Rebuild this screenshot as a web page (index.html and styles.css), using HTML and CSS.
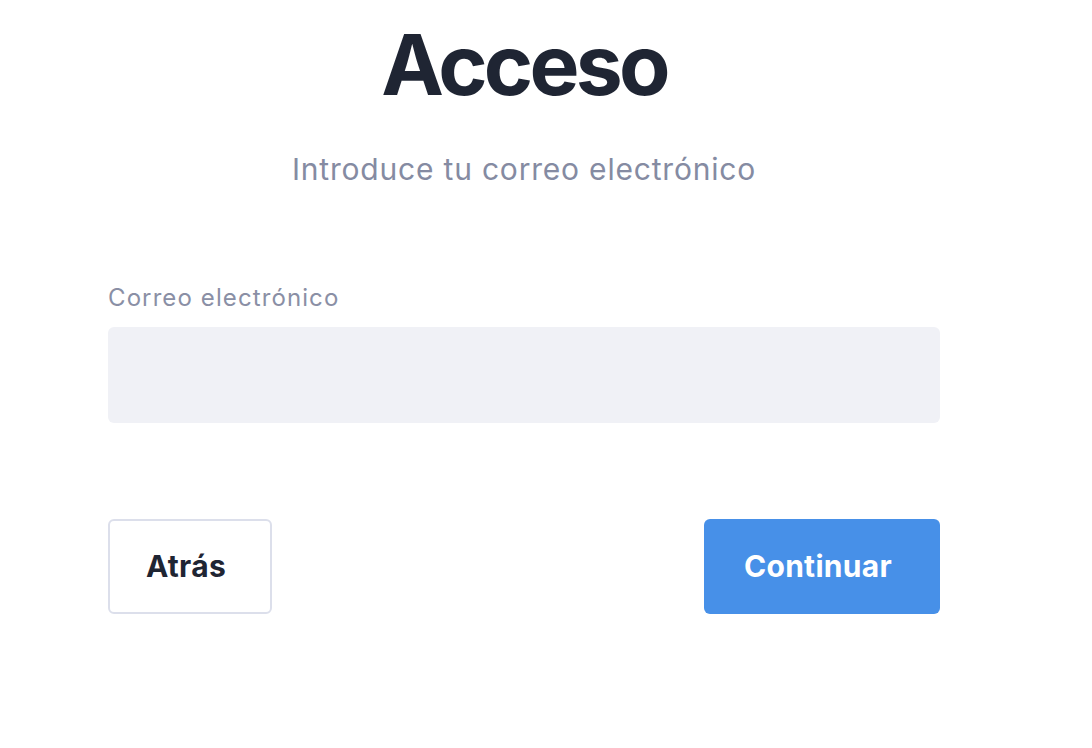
FILE: index.html
```html
<!DOCTYPE html>
<html lang="es">
<head>
    <meta charset="UTF-8">
    <meta name="viewport" content="width=device-width, initial-scale=1.0">
    <title>Acceso</title>
    <link rel="stylesheet" href="styles.css">
</head>
<body>
    <div class="login">
        <h1 class="title">Acceso</h1>
        <p class="subtitle">Introduce tu correo electrónico</p>

        <form class="login-form">
            <label for="email" class="label">Correo electrónico</label>
            <input type="email" id="email" class="input">

            <div class="actions">
                <button type="button" class="btn btn-back">Atrás</button>
                <button type="submit" class="btn btn-primary">Continuar</button>
            </div>
        </form>
    </div>
</body>
</html>
```

FILE: styles.css
```css
body {
    margin: 0;
    font-family: Inter, "Noto Sans", sans-serif;
    background-color: #ffffff;
    color: #1f2533;
}
.login {
    width: 832px;
    margin-left: 108px;
    padding-top: 15px;
}
.title {
    margin: 0;
    font-size: 84px;
    line-height: 1.2;
    font-weight: 700;
    letter-spacing: -0.045em;
    text-align: center;
    color: #1f2533;
}
.subtitle {
    margin: 35px 0 0;
    font-size: 30px;
    line-height: 1.2;
    letter-spacing: 0.8px;
    text-align: center;
    color: #858ba2;
}
.login-form {
    margin-top: 97px;
}
.label {
    display: block;
    font-size: 24px;
    line-height: 1.2;
    letter-spacing: 1.1px;
    color: #8a8fa5;
}
.input {
    display: block;
    box-sizing: border-box;
    width: 100%;
    height: 96px;
    margin-top: 14px;
    border: none;
    border-radius: 6px;
    background-color: #f0f1f6;
    font: inherit;
}
.actions {
    display: flex;
    justify-content: space-between;
    margin-top: 96px;
}
.btn {
    box-sizing: border-box;
    height: 95px;
    padding: 0 8px 0 0;
    border-radius: 6px;
    font-family: inherit;
    font-size: 30px;
    font-weight: 700;
    letter-spacing: 0.3px;
    cursor: pointer;
}
.btn-back {
    width: 164px;
    background-color: #ffffff;
    border: 2px solid #dcdfeb;
    color: #1f2533;
}
.btn-primary {
    width: 236px;
    background-color: #4790e8;
    border: none;
    color: #ffffff;
}
```
